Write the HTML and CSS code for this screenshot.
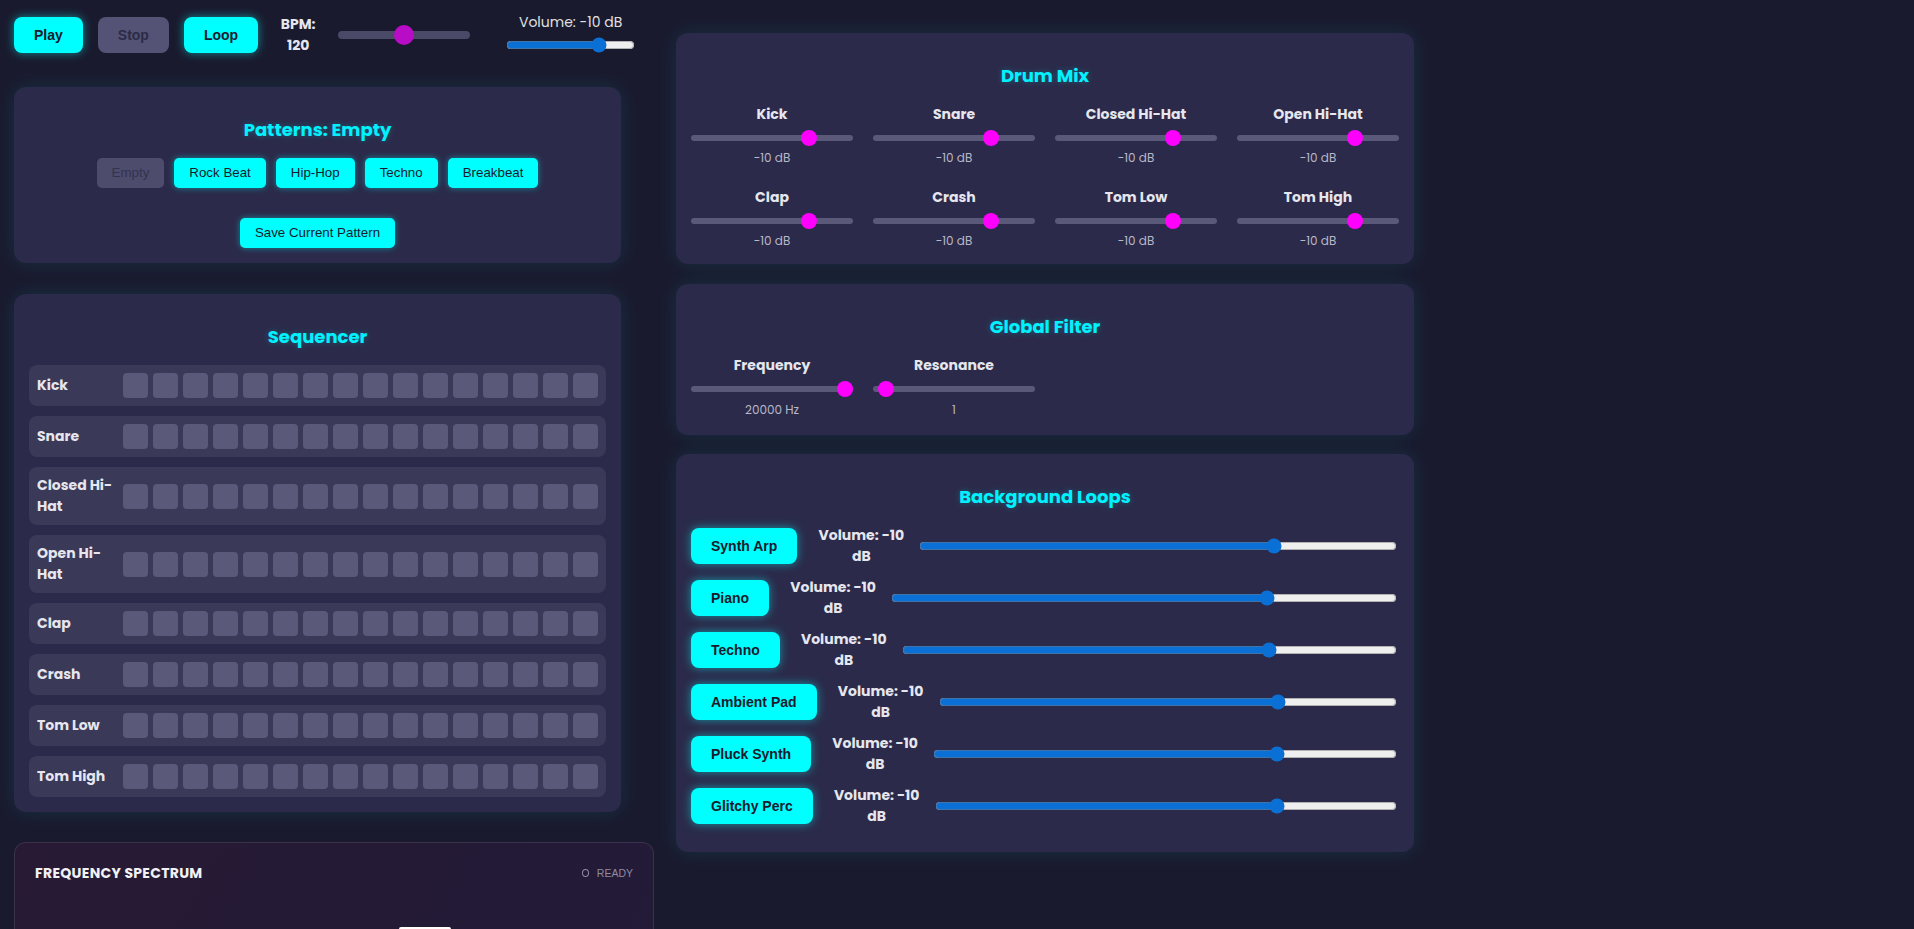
FILE: index.html
```html
<!DOCTYPE html>
<html lang="en">
<head>
<meta charset="utf-8">
<title>Drum Machine</title>
<link rel="stylesheet" href="styles.css">
</head>
<body>
<div class="app">
  <div class="col-left">
    <div class="transport">
      <button class="btn btn-main">Play</button>
      <button class="btn btn-main" disabled>Stop</button>
      <button class="btn btn-main">Loop</button>
      <div class="bpm-label">BPM: 120</div>
      <input type="range" class="bpm-range" min="60" max="180" value="120">
      <div class="volume-group">
        <span class="volume-label">Volume: -10 dB</span>
        <input type="range" class="native-range" min="-40" max="0" value="-10">
      </div>
    </div>

    <section class="panel panel-left patterns">
      <h2 class="panel-title">Patterns: Empty</h2>
      <div class="pattern-buttons">
        <button class="btn btn-pattern" disabled>Empty</button>
        <button class="btn btn-pattern">Rock Beat</button>
        <button class="btn btn-pattern">Hip-Hop</button>
        <button class="btn btn-pattern">Techno</button>
        <button class="btn btn-pattern">Breakbeat</button>
      </div>
      <div class="pattern-save">
        <button class="btn btn-pattern">Save Current Pattern</button>
      </div>
    </section>

    <section class="panel panel-left sequencer">
      <h2 class="panel-title">Sequencer</h2>
      <div class="seq-rows">
        <div class="seq-row"><div class="seq-label">Kick</div><div class="seq-cells"><span class="cell"></span><span class="cell"></span><span class="cell"></span><span class="cell"></span><span class="cell"></span><span class="cell"></span><span class="cell"></span><span class="cell"></span><span class="cell"></span><span class="cell"></span><span class="cell"></span><span class="cell"></span><span class="cell"></span><span class="cell"></span><span class="cell"></span><span class="cell"></span></div></div>
        <div class="seq-row"><div class="seq-label">Snare</div><div class="seq-cells"><span class="cell"></span><span class="cell"></span><span class="cell"></span><span class="cell"></span><span class="cell"></span><span class="cell"></span><span class="cell"></span><span class="cell"></span><span class="cell"></span><span class="cell"></span><span class="cell"></span><span class="cell"></span><span class="cell"></span><span class="cell"></span><span class="cell"></span><span class="cell"></span></div></div>
        <div class="seq-row"><div class="seq-label">Closed Hi-Hat</div><div class="seq-cells"><span class="cell"></span><span class="cell"></span><span class="cell"></span><span class="cell"></span><span class="cell"></span><span class="cell"></span><span class="cell"></span><span class="cell"></span><span class="cell"></span><span class="cell"></span><span class="cell"></span><span class="cell"></span><span class="cell"></span><span class="cell"></span><span class="cell"></span><span class="cell"></span></div></div>
        <div class="seq-row"><div class="seq-label">Open Hi-Hat</div><div class="seq-cells"><span class="cell"></span><span class="cell"></span><span class="cell"></span><span class="cell"></span><span class="cell"></span><span class="cell"></span><span class="cell"></span><span class="cell"></span><span class="cell"></span><span class="cell"></span><span class="cell"></span><span class="cell"></span><span class="cell"></span><span class="cell"></span><span class="cell"></span><span class="cell"></span></div></div>
        <div class="seq-row"><div class="seq-label">Clap</div><div class="seq-cells"><span class="cell"></span><span class="cell"></span><span class="cell"></span><span class="cell"></span><span class="cell"></span><span class="cell"></span><span class="cell"></span><span class="cell"></span><span class="cell"></span><span class="cell"></span><span class="cell"></span><span class="cell"></span><span class="cell"></span><span class="cell"></span><span class="cell"></span><span class="cell"></span></div></div>
        <div class="seq-row"><div class="seq-label">Crash</div><div class="seq-cells"><span class="cell"></span><span class="cell"></span><span class="cell"></span><span class="cell"></span><span class="cell"></span><span class="cell"></span><span class="cell"></span><span class="cell"></span><span class="cell"></span><span class="cell"></span><span class="cell"></span><span class="cell"></span><span class="cell"></span><span class="cell"></span><span class="cell"></span><span class="cell"></span></div></div>
        <div class="seq-row"><div class="seq-label">Tom Low</div><div class="seq-cells"><span class="cell"></span><span class="cell"></span><span class="cell"></span><span class="cell"></span><span class="cell"></span><span class="cell"></span><span class="cell"></span><span class="cell"></span><span class="cell"></span><span class="cell"></span><span class="cell"></span><span class="cell"></span><span class="cell"></span><span class="cell"></span><span class="cell"></span><span class="cell"></span></div></div>
        <div class="seq-row"><div class="seq-label">Tom High</div><div class="seq-cells"><span class="cell"></span><span class="cell"></span><span class="cell"></span><span class="cell"></span><span class="cell"></span><span class="cell"></span><span class="cell"></span><span class="cell"></span><span class="cell"></span><span class="cell"></span><span class="cell"></span><span class="cell"></span><span class="cell"></span><span class="cell"></span><span class="cell"></span><span class="cell"></span></div></div>
      </div>
    </section>

    <section class="spectrum">
      <div class="spectrum-head">
        <h3 class="spectrum-title">FREQUENCY SPECTRUM</h3>
        <span class="status"><i class="status-dot"></i>READY</span>
      </div>
      <div class="spectrum-body">
        <div class="spectrum-bar"></div>
      </div>
    </section>
  </div>

  <div class="col-right">
    <section class="panel drum-mix">
      <h2 class="panel-title">Drum Mix</h2>
      <div class="mix-grid">
        <div class="mix-item"><div class="mix-label">Kick</div><input type="range" class="mix-range" min="-40" max="0" value="-10"><div class="mix-value">-10 dB</div></div>
        <div class="mix-item"><div class="mix-label">Snare</div><input type="range" class="mix-range" min="-40" max="0" value="-10"><div class="mix-value">-10 dB</div></div>
        <div class="mix-item"><div class="mix-label">Closed Hi-Hat</div><input type="range" class="mix-range" min="-40" max="0" value="-10"><div class="mix-value">-10 dB</div></div>
        <div class="mix-item"><div class="mix-label">Open Hi-Hat</div><input type="range" class="mix-range" min="-40" max="0" value="-10"><div class="mix-value">-10 dB</div></div>
        <div class="mix-item"><div class="mix-label">Clap</div><input type="range" class="mix-range" min="-40" max="0" value="-10"><div class="mix-value">-10 dB</div></div>
        <div class="mix-item"><div class="mix-label">Crash</div><input type="range" class="mix-range" min="-40" max="0" value="-10"><div class="mix-value">-10 dB</div></div>
        <div class="mix-item"><div class="mix-label">Tom Low</div><input type="range" class="mix-range" min="-40" max="0" value="-10"><div class="mix-value">-10 dB</div></div>
        <div class="mix-item"><div class="mix-label">Tom High</div><input type="range" class="mix-range" min="-40" max="0" value="-10"><div class="mix-value">-10 dB</div></div>
      </div>
    </section>

    <section class="panel filter">
      <h2 class="panel-title">Global Filter</h2>
      <div class="mix-grid">
        <div class="mix-item"><div class="mix-label">Frequency</div><input type="range" class="mix-range" min="20" max="20000" value="20000"><div class="mix-value">20000 Hz</div></div>
        <div class="mix-item"><div class="mix-label">Resonance</div><input type="range" class="mix-range" min="0" max="30" value="1"><div class="mix-value">1</div></div>
      </div>
    </section>

    <section class="panel loops">
      <h2 class="panel-title">Background Loops</h2>
      <div class="loop-row"><button class="btn btn-loop">Synth Arp</button><span class="loop-vol">Volume: -10 dB</span><input type="range" class="native-range loop-range" min="-40" max="0" value="-10"></div>
      <div class="loop-row"><button class="btn btn-loop">Piano</button><span class="loop-vol">Volume: -10 dB</span><input type="range" class="native-range loop-range" min="-40" max="0" value="-10"></div>
      <div class="loop-row"><button class="btn btn-loop">Techno</button><span class="loop-vol">Volume: -10 dB</span><input type="range" class="native-range loop-range" min="-40" max="0" value="-10"></div>
      <div class="loop-row"><button class="btn btn-loop">Ambient Pad</button><span class="loop-vol">Volume: -10 dB</span><input type="range" class="native-range loop-range" min="-40" max="0" value="-10"></div>
      <div class="loop-row"><button class="btn btn-loop">Pluck Synth</button><span class="loop-vol">Volume: -10 dB</span><input type="range" class="native-range loop-range" min="-40" max="0" value="-10"></div>
      <div class="loop-row"><button class="btn btn-loop">Glitchy Perc</button><span class="loop-vol">Volume: -10 dB</span><input type="range" class="native-range loop-range" min="-40" max="0" value="-10"></div>
    </section>
  </div>
</div>
</body>
</html>
```

FILE: styles.css
```css
* { box-sizing: border-box; }

html, body {
  margin: 0;
  padding: 0;
  background: #1a1a2e;
}

body {
  font-family: Poppins, Inter, "Open Sans", sans-serif;
  color: #e0e0e0;
}

.app {
  display: flex;
  align-items: flex-start;
  gap: 22px;
  padding: 17px 0 20px 14px;
}

.col-left {
  width: 640px;
  display: flex;
  flex-direction: column;
}

.col-right {
  width: 738px;
  margin-top: 16px;
  display: flex;
  flex-direction: column;
}

/* ---------- buttons ---------- */
.btn {
  font-family: "Liberation Sans", Arial, sans-serif;
  font-size: 13.333px;
  line-height: 16px;
  border: none;
  border-radius: 8px;
  background: #00ffff;
  color: #1a1a2e;
  cursor: pointer;
  margin: 0;
}

.btn:disabled {
  background: #545376;
  color: #2c2b46;
  box-shadow: none;
  cursor: default;
}

.btn-main {
  font-size: 14px;
  font-weight: bold;
  padding: 10px 20px;
  box-shadow: 0 0 10px rgba(0, 255, 255, 0.5);
}

.btn-pattern {
  padding: 7px 15px;
  border-radius: 5px;
  box-shadow: 0 0 6px rgba(0, 255, 255, 0.45);
}

.btn-pattern:disabled {
  background: #4d4c6c;
  color: #33324f;
}

.btn-loop {
  font-size: 14px;
  font-weight: bold;
  padding: 10px 20px;
  flex: none;
  box-shadow: 0 0 10px rgba(0, 255, 255, 0.5);
}

/* ---------- transport ---------- */
.transport {
  display: flex;
  align-items: center;
  gap: 15px;
  height: 36px;
}

.bpm-label {
  width: 50px;
  text-align: center;
  font-size: 14px;
  font-weight: 700;
  line-height: 21px;
  color: #e6e6ee;
}

.bpm-range {
  -webkit-appearance: none;
  appearance: none;
  width: 132px;
  height: 8px;
  margin: 0;
  border-radius: 4px;
  background: #4a4968;
  outline: none;
}

.bpm-range::-webkit-slider-thumb {
  -webkit-appearance: none;
  appearance: none;
  width: 20px;
  height: 20px;
  border-radius: 50%;
  background: #b90cc6;
  border: none;
}

.volume-group {
  display: flex;
  flex-direction: column;
  align-items: center;
  margin-left: 19px;
  margin-bottom: 6px;
}

.volume-label {
  font-size: 14px;
  line-height: 21px;
  color: #e0e0e0;
}

.native-range {
  margin: 4px 2px 0;
  accent-color: #0b70d6;
}

/* ---------- panels ---------- */
.panel {
  background: #2b2a4a;
  border-radius: 12px;
  padding: 15px;
  box-shadow: 0 0 20px rgba(0, 255, 255, 0.1);
}

.panel-left { width: 607px; }

.panel-title {
  margin: 14px 0 15px;
  text-align: center;
  font-size: 18px;
  line-height: 27px;
  font-weight: 700;
  color: #00f2ff;
  text-shadow: 0 0 6px rgba(0, 255, 255, 0.25);
}

.patterns { margin-top: 34px; }

.pattern-buttons {
  display: flex;
  justify-content: center;
  gap: 10px;
}

.pattern-save {
  display: flex;
  justify-content: center;
  margin-top: 30px;
}

/* ---------- sequencer ---------- */
.sequencer { margin-top: 31px; }

.seq-rows {
  display: flex;
  flex-direction: column;
  gap: 10px;
}

.seq-row {
  display: flex;
  align-items: center;
  padding: 8px;
  background: #3a3958;
  border-radius: 8px;
}

.seq-label {
  width: 76px;
  margin-right: 10px;
  font-size: 14px;
  font-weight: 700;
  line-height: 21px;
  color: #e6e6ee;
}

.seq-cells {
  display: flex;
  gap: 5px;
}

.cell {
  width: 25px;
  height: 25px;
  border-radius: 4px;
  background: #5a5979;
}

/* ---------- spectrum ---------- */
.spectrum {
  margin-top: 30px;
  width: 640px;
  height: 210px;
  padding: 20px 20px 0;
  border: 1px solid rgba(255, 255, 255, 0.1);
  border-radius: 12px;
  background: linear-gradient(120deg, #281a34 0%, #231a36 60%, #241b3a 100%);
}

.spectrum-head {
  display: flex;
  align-items: center;
  justify-content: space-between;
  height: 20px;
}

.spectrum-title {
  margin: 0;
  font-size: 14px;
  font-weight: 700;
  letter-spacing: 0.3px;
  color: #f2f2f6;
}

.status {
  display: flex;
  align-items: center;
  gap: 8px;
  font-family: "Liberation Sans", Arial, sans-serif;
  font-size: 10.5px;
  letter-spacing: 0;
  color: #8e8ca0;
}

.status-dot {
  display: block;
  width: 7px;
  height: 8px;
  border: 1.5px solid #8e8ca0;
  border-radius: 50%;
}

.spectrum-body {
  margin-top: 44px;
}

.spectrum-bar {
  width: 52px;
  height: 30px;
  margin-left: 364px;
  background: #ffffff;
  border-radius: 2px;
}

/* ---------- mix sliders ---------- */
.mix-grid {
  display: grid;
  grid-template-columns: repeat(4, 1fr);
  column-gap: 20px;
  row-gap: 21px;
}

.mix-item {
  display: flex;
  flex-direction: column;
}

.mix-label {
  text-align: center;
  font-size: 14px;
  font-weight: 700;
  line-height: 21px;
  color: #e6e6ee;
}

.mix-range {
  -webkit-appearance: none;
  appearance: none;
  width: 100%;
  height: 6px;
  margin: 10px 0 0;
  border-radius: 3px;
  background: #5a5979;
  outline: none;
}

.mix-range::-webkit-slider-thumb {
  -webkit-appearance: none;
  appearance: none;
  width: 16px;
  height: 16px;
  border-radius: 50%;
  background: #ff00ff;
  border: none;
}

.mix-value {
  margin-top: 9px;
  text-align: center;
  font-size: 12px;
  line-height: 16px;
  color: #b8b8c8;
}

.filter {
  margin-top: 20px;
  padding-bottom: 17px;
}

.filter .mix-value { margin-top: 10px; }

/* ---------- loops ---------- */
.loops { margin-top: 19px; }

.loop-row {
  display: flex;
  align-items: center;
  gap: 15px;
  margin-bottom: 10px;
}

.loop-vol {
  flex: none;
  width: 90px;
  margin: 0 -4px 0 4px;
  text-align: center;
  font-size: 14px;
  font-weight: 700;
  line-height: 21px;
  color: #e6e6ee;
}

.loop-range {
  flex: 1;
  min-width: 0;
  width: auto;
  margin: 0 2px;
}
```
